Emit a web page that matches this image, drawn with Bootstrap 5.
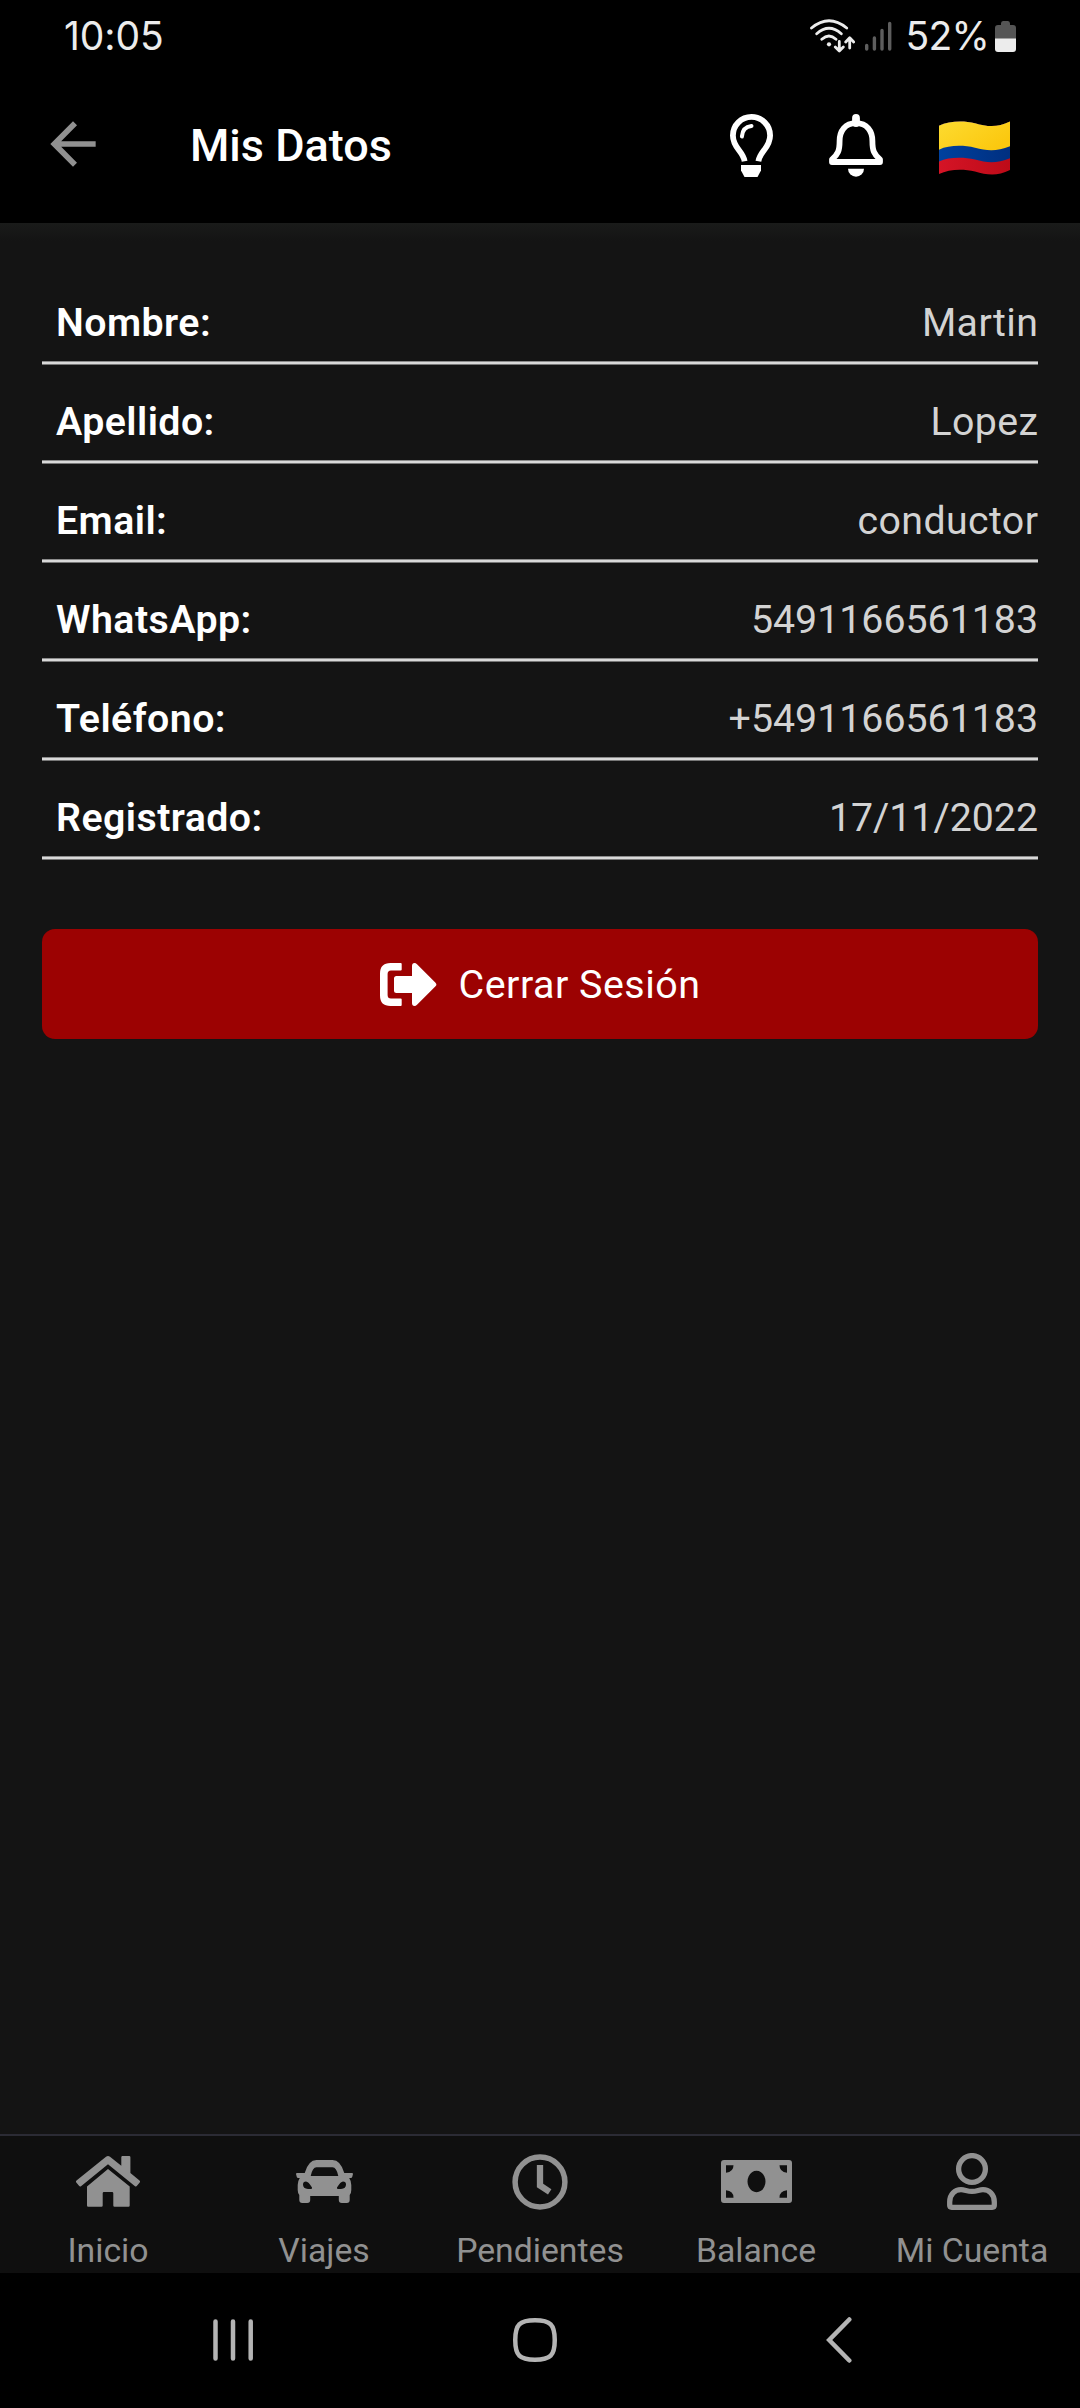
<!DOCTYPE html>
<html lang="es">
<head>
<meta charset="utf-8">
<meta name="viewport" content="width=device-width, initial-scale=1">
<title>Mis Datos</title>
<link href="https://cdn.jsdelivr.net/npm/bootstrap@5.3.0/dist/css/bootstrap.min.css" rel="stylesheet">
<style>
  body { background: #141414; font-family: Roboto, "Liberation Sans", sans-serif; color: #fff; }
  svg { display: block; flex: none; }
  .screen { height: 2408px; }
  .statusbar { height: 72px; padding: 0 64px 0 64px; font-family: Inter, Roboto, sans-serif; font-size: 39px; line-height: 72px; color: #ececec; }
  .clock-time { letter-spacing: -.1px; }
  .battery-pct { margin: 0 6px 0 14px; letter-spacing: -.8px; }
  .appbar { height: 151px; padding: 0 70px 4px 39px; }
  .back-icon { margin-bottom: 3px; }
  .flag-icon { margin-top: 4px; }
  .page-title { font-size: 45px; font-weight: 500; line-height: 52px; margin: 0 0 0 83px; }
  .appbar-actions { gap: 56px; }
  .content { padding: 50px 42px 0; background: linear-gradient(#1a1b1a, #141414 18px); }
  .data-row { height: 99px; padding-left: 14px; font-size: 39.3px; line-height: 46px; }
  .data-row::after { content: ""; display: block; height: 4px; margin-left: -14px; background: linear-gradient(#8b8b8b 1px, #d9d9d9 1px 3px, #777 3px); }
  .data-line { height: 88px; padding-top: 27px; }
  .data-label { font-weight: 600; letter-spacing: .45px; }
  .data-value { color: #d3d3d3; }
  .value-text { letter-spacing: .4px; margin-right: -.4px; }
  .btn-logout { --bs-btn-color: #fff; --bs-btn-bg: #9c0202; --bs-btn-border-width: 0; --bs-btn-border-radius: 13px; height: 110px; margin-top: 62px; gap: 22px; font-size: 39.4px; letter-spacing: .5px; }
  .btn-logout span { padding-top: 2px; }
  .tabbar { height: 139px; background: #0f0f0f; border-top: 2px solid #2b2b34; color: #919191; }
  .tab-link { color: inherit; font-size: 33.75px; line-height: 48px; padding: 0; white-space: nowrap; }
  .tab-icon { height: 91px; }
  .sysnav { height: 135px; padding: 0 17px 1px 0; }
  .home-key { margin: 0 269px 0 259px; }
</style>
</head>
<body>
<div class="screen d-flex flex-column overflow-hidden">
  <header class="bg-black">
    <div class="statusbar d-flex justify-content-between align-items-center">
      <span class="clock-time">10:05</span>
      <div class="d-flex align-items-center">
        <svg width="45" height="34" viewBox="0 0 45 34" fill="none" stroke="#ececec" stroke-width="2.8" stroke-linecap="round" stroke-linejoin="round"><path d="M1.5 9Q19-5.5 36.7 9M6.7 14.8Q19 3.8 31.3 14.8M11.8 20.3Q19 13.8 26 20.3"/><circle cx="19" cy="25.3" r="2.1" fill="#ececec" stroke="none"/><path d="M29.3 22.5v9.2M25.3 28l4 4 4-4M39.7 29V19M35.7 23l4-4.3 4 4.3"/></svg>
        <svg class="ms-2" width="29" height="30" viewBox="0 0 29 30" fill="none" stroke="#5e5e5e" stroke-width="3.4" stroke-linecap="round"><path d="M3.7 28v-3.500M11.400 28V17M19 28V9.500M26.700 28V2.500"/></svg>
        <span class="battery-pct">52%</span>
        <svg width="21" height="31" viewBox="0 0 21 31"><path fill="#555" d="M6 4V2.500Q6 0 8 0h5q2 0 2 2.500V4h3q3 0 3 3v11H0V7q0-3 3-3z"/><path fill="#ececec" d="M0 17.500h21V28q0 3-3 3H3q-3 0-3-3z"/></svg>
      </div>
    </div>
    <nav class="appbar d-flex align-items-center">
      <svg class="back-icon" width="68" height="68" viewBox="0 0 24 24" fill="#919191"><path d="M20 11H7.830l5.590-5.590L12 4l-8 8 8 8 1.410-1.410L7.830 13H20z"/></svg>
      <h1 class="page-title">Mis Datos</h1>
      <div class="appbar-actions d-flex align-items-center ms-auto">
        <svg width="43" height="63" viewBox="0 0 43 63" fill="none" stroke="#fff" stroke-width="5.800"><path d="M14.600 47.300C13 37 2.900 34 2.900 21.500a18.600 18.600 0 0 1 37.200 0C40.100 34 30 37 28.400 47.300"/><path d="M11.900 22.500Q12.500 13 21.500 12" stroke-width="4" stroke-linecap="round"/><path d="M11 51h20v5.500L27.500 63h-13L11 56.500z" fill="#fff" stroke="none"/></svg>
        <svg width="54" height="63" viewBox="0 0 54 63" fill="none" stroke="#fff" stroke-width="5.800" stroke-linejoin="round"><path d="M27 9.200C16 9.200 10.600 17 10.600 27 10.600 36.500 9 40.500 3 45.500V48H51V45.500C45 40.500 43.400 36.500 43.400 27 43.400 17 38 9.200 27 9.200z"/><path d="M27 4v5" stroke-width="7.800" stroke-linecap="round"/><path d="M19 54.700h16a8 8 0 0 1-16 0z" fill="#fff" stroke="none"/></svg>
        <svg class="flag-icon" width="71" height="54" viewBox="0 0 71 54"><defs><linearGradient id="fy" x2="1" y2=".6"><stop stop-color="#fddb30"/><stop offset="1" stop-color="#fbc80f"/></linearGradient><linearGradient id="fb" x2="1"><stop stop-color="#00419e"/><stop offset="1" stop-color="#002f80"/></linearGradient><linearGradient id="fr" x2="1"><stop stop-color="#d51426"/><stop offset="1" stop-color="#bd0b18"/></linearGradient></defs><path fill="url(#fr)" d="M0 4.700C10 0 24-.7 36 2.200 48 5.600 58 7 71 .5V49C58 55.500 48 54 36 50.500 24 47.500 10 48 0 53z"/><path fill="url(#fb)" d="M0 4.700C10 0 24-.7 36 2.200 48 5.600 58 7 71 .5V37.300C58 42.500 48 42 36 38.500 24 36 10 36 0 40.500z"/><path fill="url(#fy)" d="M0 4.700C10 0 24-.7 36 2.200 48 5.600 58 7 71 .5V25.300C58 30.500 48 30 36 26.700 24 24 10 24 0 28.700z"/></svg>
      </div>
    </nav>
  </header>

  <main class="content flex-grow-1">
    <div class="data-row"><div class="data-line d-flex justify-content-between"><span class="data-label">Nombre:</span><span class="data-value value-text">Martin</span></div></div>
    <div class="data-row"><div class="data-line d-flex justify-content-between"><span class="data-label">Apellido:</span><span class="data-value value-text">Lopez</span></div></div>
    <div class="data-row"><div class="data-line d-flex justify-content-between"><span class="data-label">Email:</span><span class="data-value value-text">conductor</span></div></div>
    <div class="data-row"><div class="data-line d-flex justify-content-between"><span class="data-label">WhatsApp:</span><span class="data-value">5491166561183</span></div></div>
    <div class="data-row"><div class="data-line d-flex justify-content-between"><span class="data-label">Teléfono:</span><span class="data-value">+5491166561183</span></div></div>
    <div class="data-row"><div class="data-line d-flex justify-content-between"><span class="data-label">Registrado:</span><span class="data-value">17/11/2022</span></div></div>
    <button type="button" class="btn btn-logout w-100 d-flex align-items-center justify-content-center">
      <svg width="57" height="43" viewBox="0 0 57 43" fill="#fff"><path d="M21.700 1v5.500q0 1-1 1H11q-3.400 0-3.400 3.500v21q0 3.500 3.400 3.500h9.700q1 0 1 1V42q0 1-1 1H10.500Q0 43 0 32.500v-22Q0 0 10.500 0h10.200q1 0 1 1z"/><path d="M14 15.500q0-2.500 2.500-2.500H32V3q0-3 2.500-3 1.300 0 2.500 1.200l18.500 18.500q1.800 1.800 0 3.600L37 41.800Q35.800 43 34.500 43 32 43 32 40V30H16.500Q14 30 14 27.500z"/></svg>
      <span>Cerrar Sesión</span>
    </button>
  </main>

  <nav class="tabbar row g-0 row-cols-5 text-center">
    <a class="tab-link col text-decoration-none" href="#"><div class="tab-icon d-flex align-items-center justify-content-center">
      <svg width="64" height="51" viewBox="0 0 64 51" fill="currentColor"><path d="M30 .8Q32-.6 34 .8L45.300 9.800V1.200Q45.300 0 46.500 0h6.700q1.200 0 1.200 1.200V17L63.500 24.600Q64.500 25.600 63.700 26.600L60.800 30.100Q60 31 59 30.200L32 8.300 5 30.200Q4 31 3.200 30.100L.3 26.600Q-.5 25.600.5 24.600z"/><path d="M32 13 53.700 30.500V49.500q0 1.200-1.200 1.200h-14q-1.200 0-1.200-1.200V37.200q0-1.200-1.200-1.200h-8.200q-1.200 0-1.200 1.200v12.300q0 1.200-1.200 1.200H12.200q-1.200 0-1.200-1.200v-19z"/></svg></div>Inicio</a>
    <a class="tab-link col text-decoration-none" href="#"><div class="tab-icon d-flex align-items-center justify-content-center">
      <svg width="57" height="43" viewBox="0 0 57 43" fill="currentColor" fill-rule="evenodd"><path d="M8.700 13Q12.500 0 20.500 0h16Q44.500 0 48.300 13H56q1 0 1 1l-.8 3q-.3 1-1.300 1h-1.700Q55.300 21 55.300 25v5q0 3-1.600 5v5q0 3-3 3h-4.900q-3 0-3-3v-4H14.200v4q0 3-3 3H6.300q-3 0-3-3v-5Q1.700 33 1.700 30v-5q0-4 2.100-7H2.100q-1 0-1.300-1L0 14q0-1 1-1zM14.700 16H42.300Q40.500 7.300 36.500 7.300h-16Q16.500 7.300 14.700 16zM7 24.500q0-3 3-3 2.500.2 6 6 .6 1.500-1.500 1.500H12Q7 28.500 7 24.500zM50 24.500q0-3-3-3-2.500.2-6 6-.6 1.500 1.500 1.500H45Q50 28.500 50 24.500z"/></svg></div>Viajes</a>
    <a class="tab-link col text-decoration-none" href="#"><div class="tab-icon d-flex align-items-center justify-content-center">
      <svg width="56" height="56" viewBox="0 0 56 56" fill="none" stroke="currentColor"><circle cx="28" cy="28" r="24.900" stroke-width="5.500"/><path d="M28 11v20.500l9.700 6.300" stroke-width="6.300"/></svg></div>Pendientes</a>
    <a class="tab-link col text-decoration-none" href="#"><div class="tab-icon d-flex align-items-center justify-content-center">
      <svg width="71" height="43" viewBox="0 0 71 43" fill="currentColor" fill-rule="evenodd"><path d="M3 0h65q3 0 3 3v37q0 3-3 3H3q-3 0-3-3V3q0-3 3-3zM5 5.300v7.400Q12.500 12 12.500 5.300zM66 5.300v7.400Q58.500 12 58.500 5.300zM5 37.700v-7.400Q12.500 31 12.500 37.700zM66 37.700v-7.400Q58.500 31 58.500 37.700zM35.500 10.800a9 10.700 0 1 0 .01 0z"/></svg></div>Balance</a>
    <a class="tab-link col text-decoration-none" href="#"><div class="tab-icon d-flex align-items-center justify-content-center">
      <svg width="50" height="57" viewBox="0 0 50 57" fill="none" stroke="currentColor" stroke-width="5.300"><circle cx="25" cy="16" r="13.400"/><path stroke-linejoin="round" d="M2.700 49C2.700 41 8 36.700 14 36.700 18 36.700 20 38.400 25 38.400S32 36.700 36 36.700C42 36.700 47.300 41 47.300 49v3.300q0 2-2 2H4.700q-2 0-2-2z"/></svg></div>Mi Cuenta</a>
  </nav>

  <footer class="sysnav bg-black d-flex align-items-center justify-content-center">
    <svg width="42" height="44" viewBox="0 0 42 44" stroke="#b4b4b4" stroke-width="4.500" stroke-linecap="round"><path d="M3.500 3.500v37M21 3.500v37M38.700 3.500v37"/></svg>
    <svg class="home-key" width="44" height="44" viewBox="0 0 44 44" fill="none" stroke="#b4b4b4" stroke-width="4.500"><path d="M22 2.250c15.500 0 19.750 4.250 19.750 19.750S37.500 41.750 22 41.750 2.250 37.500 2.250 22 6.500 2.250 22 2.250z"/></svg>
    <svg width="26" height="46" viewBox="0 0 26 46" fill="none" stroke="#b4b4b4" stroke-width="4.500" stroke-linecap="round"><path d="M23.300 2.500 3.200 23 23.300 43.500"/></svg>
  </footer>
</div>
<script src="https://cdn.jsdelivr.net/npm/bootstrap@5.3.0/dist/js/bootstrap.bundle.min.js"></script>
</body>
</html>
